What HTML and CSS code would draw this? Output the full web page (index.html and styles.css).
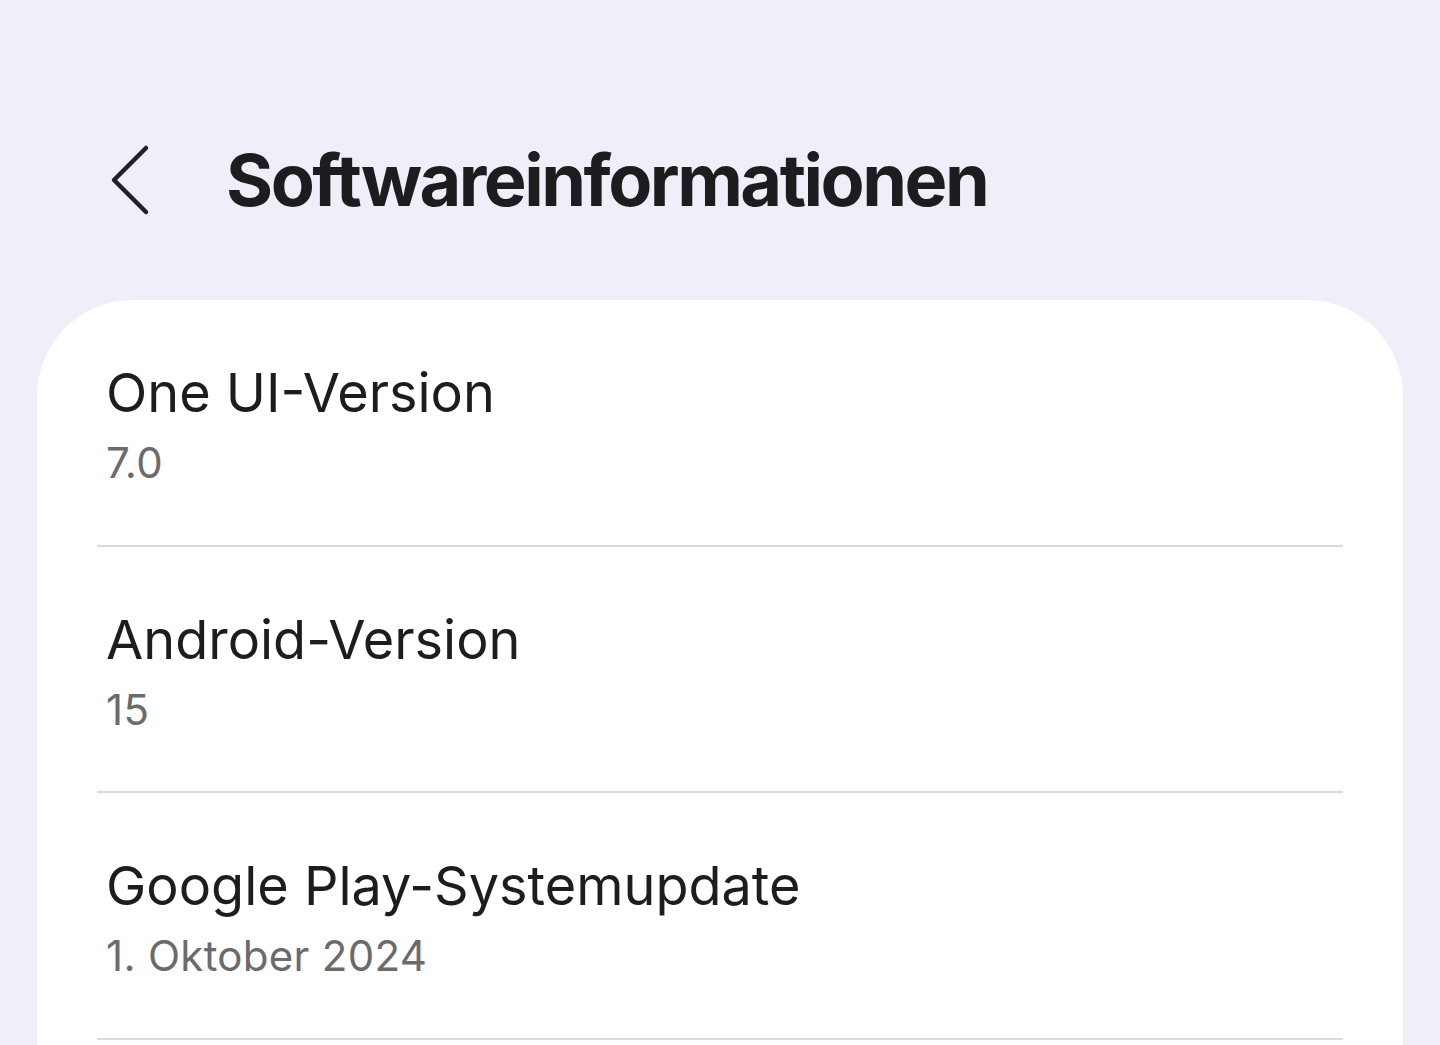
FILE: index.html
```html
<!DOCTYPE html>
<html lang="de">
<head>
<meta charset="utf-8">
<title>Softwareinformationen</title>
<link rel="stylesheet" href="styles.css">
</head>
<body>
<div class="screen">
  <header class="topbar">
    <button class="back" aria-label="Zurück">
      <svg width="44" height="72" viewBox="0 0 44 72"><path d="M38 4 L6 36 L38 68" fill="none" stroke="#202024" stroke-width="4.5" stroke-linecap="round" stroke-linejoin="round"/></svg>
    </button>
    <h1 class="title">Softwareinformationen</h1>
  </header>
  <section class="card">
    <div class="row">
      <div class="row-title">One UI-Version</div>
      <div class="row-sub">7.0</div>
    </div>
    <div class="row">
      <div class="row-title">Android-Version</div>
      <div class="row-sub">15</div>
    </div>
    <div class="row">
      <div class="row-title">Google Play-Systemupdate</div>
      <div class="row-sub">1. Oktober 2024</div>
    </div>
  </section>
</div>
</body>
</html>
```
FILE: styles.css
```css
html, body {
  margin: 0;
  padding: 0;
  background: #efeff9;
}
body {
  font-family: Inter, Roboto, "Noto Sans", sans-serif;
  color: #1d1d20;
  width: 1440px;
  height: 1045px;
  overflow: hidden;
}
.screen {
  padding: 0 37px;
}
.topbar {
  display: flex;
  align-items: center;
  height: 300px;
  padding: 60px 0 0 71px;
  box-sizing: border-box;
}
.back {
  background: none;
  border: 0;
  padding: 0;
  width: 44px;
  height: 72px;
  display: flex;
}
.title {
  margin: 0 0 0 74px;
  font-size: 72px;
  font-weight: 700;
  letter-spacing: -2.5px;
  line-height: 1;
}
.card {
  background: #ffffff;
  border-radius: 96px 96px 0 0;
  padding: 0 60px;
  height: 745px;
  overflow: hidden;
}
.row {
  border-bottom: 2px solid #d9dbde;
  height: 246.5px;
  padding: 61px 0 0 9px;
  box-sizing: border-box;
}
.row-title {
  font-size: 54px;
  line-height: 64px;
  letter-spacing: 0;
}
.row-sub {
  font-size: 42px;
  line-height: 60px;
  letter-spacing: 0.3px;
  color: #6b6b6e;
  margin-top: 8px;
}
```
